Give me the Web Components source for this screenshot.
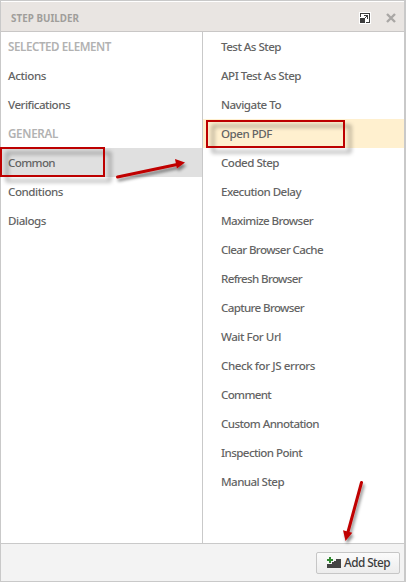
<!DOCTYPE html>
<html lang="en">
<head>
<meta charset="utf-8">
<title>Step Builder</title>
<style>
html,body{margin:0;width:406px;height:582px;overflow:hidden;background:#fff}
body{font:500 11.6px/29px "Noto Sans","Open Sans",sans-serif;color:#646464}
</style>
</head>
<body>
<step-builder></step-builder>
<script>
const attach = (el, html) => {
  const t = document.createElement('template');
  t.innerHTML = html;
  el.attachShadow({mode: 'open'}).append(t.content.cloneNode(true));
  return el.shadowRoot;
};

// A single-line label spaced to occupy the width given in pixels.
customElements.define('fit-label', class extends HTMLElement {
  connectedCallback() {
    if (this.shadowRoot) return;
    const root = attach(this, `<style>:host{display:inline-block;white-space:nowrap}span{display:inline-block}</style><span></span>`);
    const s = root.querySelector('span');
    s.textContent = this.getAttribute('text');
    const w = +this.getAttribute('width');
    const natural = s.getBoundingClientRect().width;
    this.style.width = w + 'px';
    s.style.letterSpacing = (w - natural) / s.textContent.length + 'px';
  }
});

customElements.define('step-row', class extends HTMLElement {
  connectedCallback() {
    if (this.shadowRoot) return;
    attach(this, `<style>
      :host{display:flex;box-sizing:border-box;height:29px;padding:1px 0 0 var(--indent,7px);align-items:center;line-height:28px}
      :host([heading]){color:#b2b2b2;font-weight:600}
      :host([selected]){background:var(--selected)}
    </style><fit-label text="${this.getAttribute('text')}" width="${this.getAttribute('width')}"></fit-label>`);
  }
});

customElements.define('panel-header', class extends HTMLElement {
  connectedCallback() {
    attach(this, `<style>
      :host{display:flex;box-sizing:border-box;height:31px;border-top:1px solid #fff;border-bottom:1px solid #c9c7c6;background:#e9e5e2;align-items:center;padding:0 8px 0 10px;color:#a09e9b;font-size:9.8px;font-weight:700;line-height:14px}
      fit-label{margin-top:4px}
      .icons{margin-left:auto;display:flex;gap:15px;align-items:center;padding-top:2px}
      svg{display:block}
    </style><fit-label text="STEP BUILDER" width="68"></fit-label>
    <div class="icons">
      <svg width="12" height="12" viewBox="0 0 12 12"><path fill="#fff" d="M0 0h12v12H0z"/><path fill="#3c3c3c" d="M1 1h10v10H7v-1h3V2H2v3H1zM1 6h5v5H1zM5 3h4v4H8V5H7v1H6V5h1V4H5z"/></svg>
      <svg width="10" height="10" viewBox="0 0 10 10"><path stroke="#a9a7a5" stroke-width="2.400" d="M1 1l8 8M9 1L1 9"/></svg>
    </div>`);
  }
});

customElements.define('step-button', class extends HTMLElement {
  connectedCallback() {
    attach(this, `<style>
      :host{display:flex;box-sizing:border-box;width:84px;height:22px;border:1px solid #c6c6c6;border-radius:2px;background:linear-gradient(#fbfbfb,#ececec);align-items:center;padding:0 0 1px 10px;color:#3c3c3c;font-size:11.8px;line-height:19px}
      svg{display:block;margin-right:3px;flex:none}
    </style><svg width="14" height="12" viewBox="0 0 14 12"><path fill="#444" d="M0 12V8h5V5h4V3h5v9z"/><path fill="#f8f8f8" d="M0 0h5v1h2v5H5v2H0z"/><path fill="#30892f" d="M2 1h2v2h2v2H4v2H2V5H0V3h2z"/></svg><fit-label text="Add Step" width="46"></fit-label>`);
  }
});

customElements.define('mark-overlay', class extends HTMLElement {
  connectedCallback() {
    attach(this, `<style>:host{position:absolute;inset:0;pointer-events:none}svg{display:block}</style>
    <svg width="406" height="582" viewBox="0 0 406 582"><defs>
      <filter id="a" x="-20%" y="-60%" width="150%" height="240%"><feDropShadow dx="6" dy="5" stdDeviation="1.900" flood-color="#000" flood-opacity=".42"/></filter>
      <filter id="b" x="-30%" y="-60%" width="170%" height="260%"><feDropShadow dx="1.500" dy="3" stdDeviation="1.800" flood-color="#000" flood-opacity=".45"/></filter>
    </defs>
    <g fill="none" stroke="#bd0006" stroke-width="2"><rect x="1" y="148" width="103" height="28" filter="url(#a)"/><rect x="207" y="121" width="137" height="26" filter="url(#a)"/></g>
    <g filter="url(#b)" fill="#c00006" stroke="#c00006"><path stroke-width="3" stroke-linecap="round" d="M117.500 177L177 164.500"/><path stroke="none" d="M185 162.500L175 159l1.900 9.500z"/></g>
    <g filter="url(#b)" fill="#c00006" stroke="#c00006"><path stroke-width="3" stroke-linecap="round" d="M361.500 482.500L348 532"/><path stroke="none" d="M345.500 541l-2.500-10.800 9.300 2.500z"/></g>
    </svg>`);
  }
});

customElements.define('step-builder', class extends HTMLElement {
  connectedCallback() {
    const left = [['SELECTED ELEMENT',103,'heading'],['Actions',38],['Verifications',62],['GENERAL',50,'heading'],['Common',47,'selected'],['Conditions',55],['Dialogs',38]];
    const right = [['Test As Step',60],['API Test As Step',80],['Navigate To',60],['Open PDF',51,'selected'],['Coded Step',58],['Execution Delay',80],['Maximize Browser',92],['Clear Browser Cache',102],['Refresh Browser',81],['Capture Browser',83],['Wait For Url',60],['Check for JS errors',94],['Comment',50],['Custom Annotation',98],['Inspection Point',81],['Manual Step',63]];
    const rows = list => list.map(([t, w, k]) => `<step-row text="${t}" width="${w}" ${k || ''}></step-row>`).join('');
    attach(this, `<style>
      :host{position:relative;display:flex;flex-direction:column;box-sizing:border-box;width:406px;height:582px;border:1px solid #c9c9c9;border-right-width:2px}
      main{flex:1;display:grid;grid-template-columns:201px 1fr;min-height:0}
      nav{--selected:#e0e0e0}
      section{border-left:1px solid #c9c9c9;--indent:18px;--selected:#fff0cf}
      footer{box-sizing:border-box;height:38px;border-top:1px solid #c9c9c9;background:#f3f3f3;display:flex;justify-content:flex-end;align-items:center;padding-right:4px}
      mark-overlay{left:-1px;top:-1px}
    </style><panel-header></panel-header><main><nav>${rows(left)}</nav><section>${rows(right)}</section></main><footer><step-button></step-button></footer><mark-overlay></mark-overlay>`);
  }
});
</script>
</body>
</html>
